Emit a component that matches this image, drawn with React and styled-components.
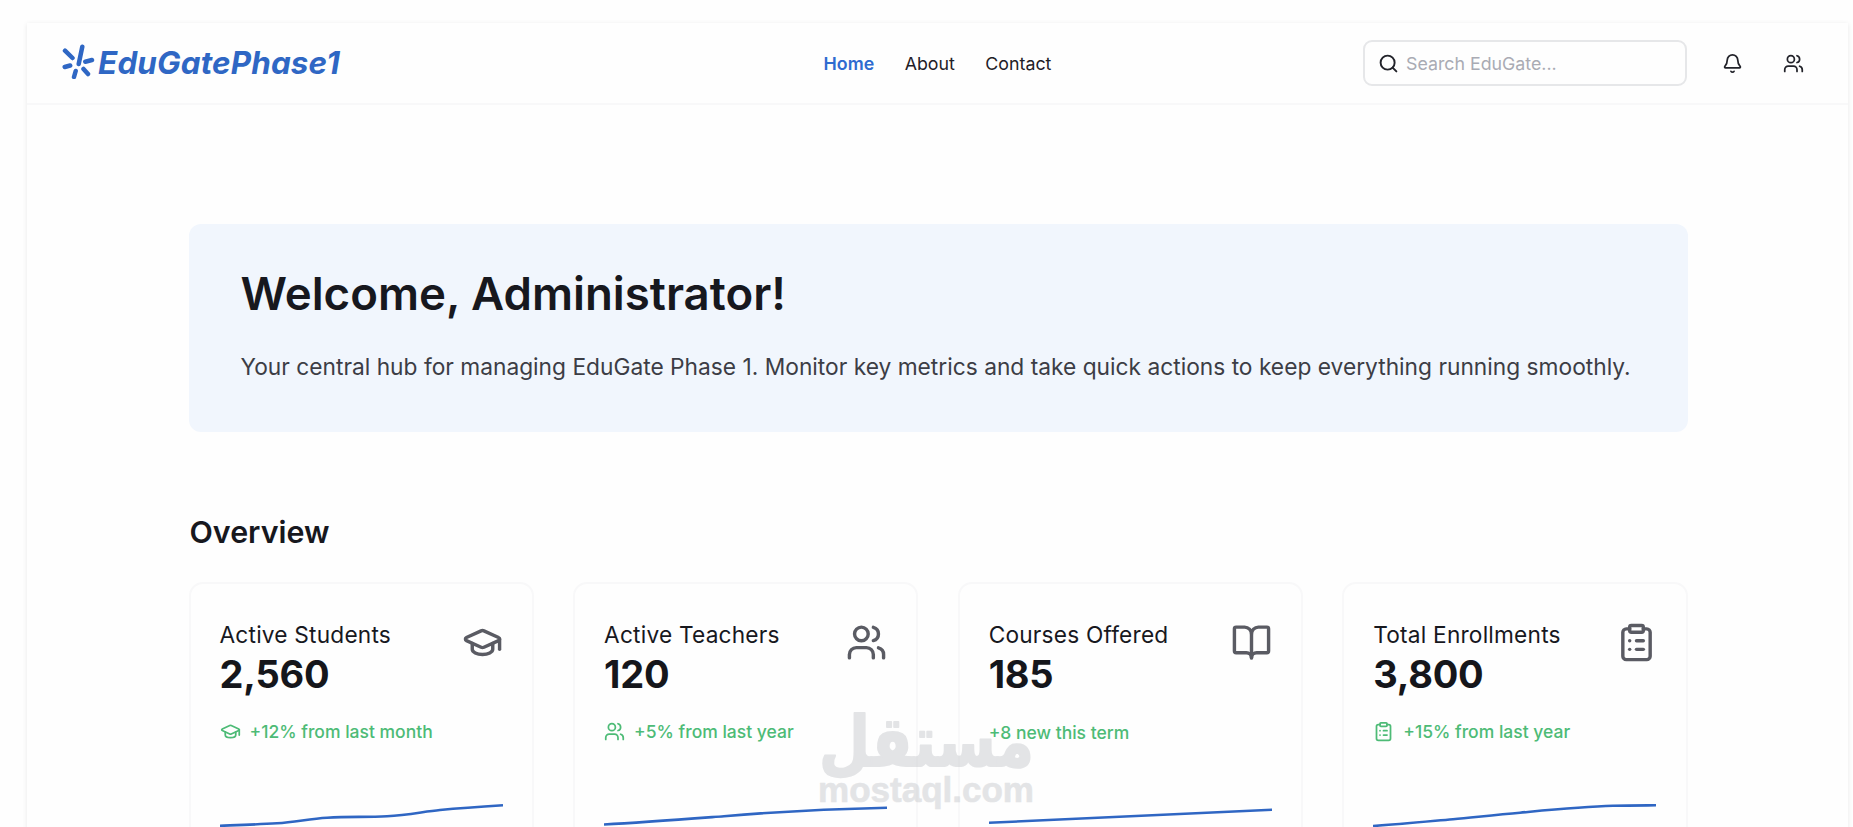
import styled, { createGlobalStyle } from "styled-components";
import {
  Bell,
  BookOpen,
  ClipboardList,
  GraduationCap,
  Search,
  Users,
} from "lucide-react";

const GlobalStyle = createGlobalStyle`
  * {
    box-sizing: border-box;
  }
  body {
    margin: 0;
    background-color: #fefefe;
    color: #17181e;
    font-family: Inter, "Liberation Sans", sans-serif;
  }
`;

const Page = styled.div`
  height: 827px;
  padding: 23px 5px 0 27px;
  overflow: hidden;
  position: relative;
`;
const Panel = styled.div`
  height: 900px;
  background-color: #fefefe;
  box-shadow: 0 1px 5px rgba(0, 0, 0, 0.09);
`;
const StyledHeader = styled.header`
  display: grid;
  grid-template-columns: 1fr auto 1fr;
  align-items: center;
  height: 82px;
  padding: 0 34px;
  border-bottom: 2px solid #f8f8f9;
`;
const Logo = styled.a`
  display: flex;
  align-items: center;
  gap: 3px;
  height: 36px;
  margin-bottom: 5px;
  color: #2f67c4;
`;
const LogoText = styled.span`
  font-size: 31.4px;
  line-height: 36px;
  font-weight: 700;
  font-style: italic;
  letter-spacing: 0.15px;
  padding-top: 4px;
`;
const StyledNav = styled.nav`
  display: flex;
  gap: 30.5px;
  padding-top: 2px;
`;
const NavLink = styled.a`
  font-size: 17.8px;
  line-height: 24px;
  font-weight: ${(props) => (props.$active ? 600 : 400)};
  color: ${(props) => (props.$active ? "#2f6bd0" : "#1f2027")};
`;
const HeaderTools = styled.div`
  display: flex;
  align-items: center;
  justify-content: flex-end;
  padding-right: 10px;
`;
const SearchBox = styled.label`
  display: flex;
  align-items: center;
  gap: 7px;
  width: 324px;
  height: 46px;
  padding: 0 13px;
  border: 2px solid #e6e7e9;
  border-radius: 9px;
  margin-right: 35px;
`;
const SearchText = styled.span`
  font-size: 17.8px;
  color: #a9abb4;
`;
const IconButton = styled.span`
  display: flex;
  margin-left: ${(props) => props.$gap || 0}px;
`;

const Content = styled.main`
  width: 1499px;
  margin: 119px 0 0 161.5px;
`;
const Banner = styled.section`
  height: 208px;
  padding: 41px 51px 0 52px;
  border-radius: 12px;
  background-color: #f1f6fd;
`;
const BannerTitle = styled.h1`
  margin: 0;
  font-size: 45.6px;
  line-height: 57px;
  font-weight: 600;
  white-space: nowrap;
`;
const BannerText = styled.p`
  margin: 29px 0 0;
  font-size: 22.75px;
  line-height: 32px;
  color: #3c3d45;
  white-space: nowrap;
`;
const SectionTitle = styled.h2`
  margin: 80px 0 0 1px;
  font-size: 30.4px;
  line-height: 40px;
  font-weight: 600;
`;
const Cards = styled.div`
  display: grid;
  grid-template-columns: repeat(4, minmax(0, 1fr));
  gap: 39.3px;
  margin-top: 30px;
`;
const Card = styled.article`
  height: 300px;
  padding: 37px 29px 0;
  border: 2px solid #f8f8f9;
  border-radius: 14px;
`;
const CardTop = styled.div`
  display: flex;
  justify-content: space-between;
  color: #5a5b63;

  > svg {
    margin-top: 1px;
  }
`;
const CardLabel = styled.div`
  margin-top: -1px;
  font-size: 22.7px;
  line-height: 30px;
  letter-spacing: 0.2px;
  white-space: nowrap;
  color: #17181e;
`;
const CardValue = styled.div`
  font-size: 38px;
  line-height: 48px;
  font-weight: 700;
  letter-spacing: -0.2px;
  color: #15161b;
`;
const Trend = styled.div`
  display: flex;
  align-items: center;
  gap: 9px;
  height: 24px;
  margin-top: ${(props) => (props.$plain ? 22 : 21)}px;
  margin-bottom: ${(props) => (props.$plain ? 45 : 46)}px;
  font-size: 17.5px;
  font-weight: 500;
  color: #4dbb76;
`;
const Chart = styled.svg`
  display: block;
  width: 283px;
  height: 60px;
`;
const Watermark = styled.svg`
  position: absolute;
  left: 809px;
  top: 700px;
  width: 236px;
  height: 120px;
  overflow: visible;
  fill: #c9cbcf;
  stroke: #c9cbcf;
  stroke-linejoin: round;
  opacity: 0.5;
`;

const cards = [
  {
    label: "Active Students",
    value: "2,560",
    trend: "+12% from last month",
    icon: GraduationCap,
    line: "M0 36.7C20 36 38 35.5 57 34.3C76 33 90 29.6 107 28.7C130 27.2 146 28.5 167 27.3C188 26 204 22.6 220 21C240 19.2 263 17.6 283 16.3",
  },
  {
    label: "Active Teachers",
    value: "120",
    trend: "+5% from last year",
    icon: Users,
    line: "M0 35.5C40 33.3 80 30.2 120 27.2C175 22.6 225 20 283 18.7",
  },
  {
    label: "Courses Offered",
    value: "185",
    trend: "+8 new this term",
    icon: BookOpen,
    line: "M0 33.8L283 20.7",
    plain: true,
  },
  {
    label: "Total Enrollments",
    value: "3,800",
    trend: "+15% from last year",
    icon: ClipboardList,
    line: "M0 37C28 35 54 32.5 80 30.2C103 28 125 25.6 147 23.7C178 20.8 210 17.6 240 16.8C255 16.4 268 16.4 283 16.3",
  },
];

function LogoMark() {
  return (
    <svg width="34" height="36" viewBox="0 0 34 36" fill="none">
      <path
        d="M4 7.7L11.5 15M21.3 3.7L17.7 21M24.3 18.7L31 17M3.7 24L9.2 22.5M14.7 28L13 34M22.5 26L27 31"
        stroke="currentColor"
        strokeWidth="4.5"
        strokeLinecap="round"
      />
    </svg>
  );
}

export default function App() {
  return (
    <Page>
      <GlobalStyle />
      <Panel>
        <StyledHeader>
          <Logo>
            <LogoMark />
            <LogoText>EduGatePhase1</LogoText>
          </Logo>
          <StyledNav>
            <NavLink $active>Home</NavLink>
            <NavLink>About</NavLink>
            <NavLink>Contact</NavLink>
          </StyledNav>
          <HeaderTools>
            <SearchBox>
              <Search size={21} color="#22232a" strokeWidth={2.2} />
              <SearchText>Search EduGate...</SearchText>
            </SearchBox>
            <IconButton>
              <Bell size={21} color="#22232a" />
            </IconButton>
            <IconButton $gap={40}>
              <Users size={21} color="#22232a" />
            </IconButton>
          </HeaderTools>
        </StyledHeader>
        <Content>
          <Banner>
            <BannerTitle>Welcome, Administrator!</BannerTitle>
            <BannerText>
              Your central hub for managing EduGate Phase 1. Monitor key metrics
              and take quick actions to keep everything running smoothly.
            </BannerText>
          </Banner>
          <SectionTitle>Overview</SectionTitle>
          <Cards>
            {cards.map(({ label, value, trend, icon: Icon, line, plain }) => (
              <Card key={label}>
                <CardTop>
                  <div>
                    <CardLabel>{label}</CardLabel>
                    <CardValue>{value}</CardValue>
                  </div>
                  <Icon size={41} />
                </CardTop>
                <Trend $plain={plain}>
                  {!plain && <Icon size={21} />}
                  <span>{trend}</span>
                </Trend>
                <Chart viewBox="0 0 283 60">
                  <path d={line} fill="none" stroke="#2f66c3" strokeWidth="2.6" />
                </Chart>
              </Card>
            ))}
          </Cards>
        </Content>
      </Panel>
      <Watermark viewBox="0 0 236 120">
        <text
          x="225"
          y="66"
          direction="rtl"
          fontFamily="DejaVu Sans"
          fontWeight="700"
          fontSize="70"
          strokeWidth="2"
          textLength="215"
          lengthAdjust="spacingAndGlyphs"
        >
          مستقل
        </text>
        <text
          x="9"
          y="102"
          fontFamily="Liberation Sans"
          fontWeight="700"
          fontSize="35"
          strokeWidth="0.6"
          textLength="216"
          lengthAdjust="spacingAndGlyphs"
        >
          mostaql.com
        </text>
      </Watermark>
    </Page>
  );
}
